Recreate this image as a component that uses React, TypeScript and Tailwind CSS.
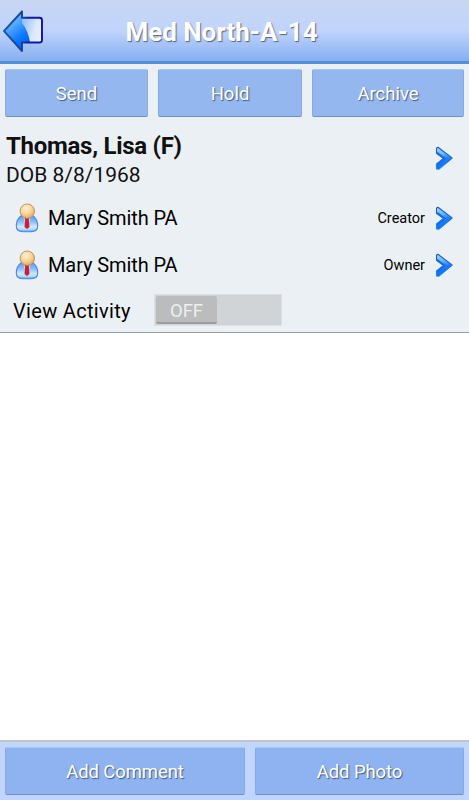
import { useState } from "react";
import clsx from "clsx";

function BackIcon() {
  return (
    <svg width="48" height="48" viewBox="0 0 48 48" aria-hidden="true">
      <defs>
        <linearGradient id="back-base" x1="0" y1="0" x2="1" y2="0.3">
          <stop offset="0" stopColor="#3f9bff" />
          <stop offset="0.5" stopColor="#8fbeff" />
          <stop offset="0.8" stopColor="#dbe7ff" />
          <stop offset="1" stopColor="#f0f5ff" />
        </linearGradient>
        <linearGradient id="back-shade" x1="0.2" y1="0" x2="0.7" y2="1">
          <stop offset="0.1" stopColor="#9bd2ff" />
          <stop offset="0.45" stopColor="#4ba3ff" />
          <stop offset="0.7" stopColor="#0f78ff" />
          <stop offset="1" stopColor="#0058ec" />
        </linearGradient>
        <linearGradient id="back-edge" x1="0" y1="0" x2="1" y2="0">
          <stop offset="0" stopColor="#1c5aa8" />
          <stop offset="0.5" stopColor="#164199" />
          <stop offset="0.65" stopColor="#0c1ca8" />
          <stop offset="1" stopColor="#0a10b8" />
        </linearGradient>
        <clipPath id="back-clip">
          <path d="M4 25 L22 5.500 V11.800 H39.500 Q42 11.800 42 14.300 V34 Q42 36.500 39.500 36.500 H22 V45 Z" />
        </clipPath>
      </defs>
      <g clipPath="url(#back-clip)">
        <rect width="48" height="48" fill="url(#back-base)" />
        <path d="M0 0 H22 V17 Q28 24 30.500 38 L22 48 H0 Z" fill="url(#back-shade)" />
      </g>
      <path
        d="M4 25 L22 5.500 V11.800 H39.500 Q42 11.800 42 14.300 V34 Q42 36.500 39.500 36.500 H22 V45 Z"
        fill="none"
        stroke="url(#back-edge)"
        strokeWidth="1.9"
        strokeLinejoin="round"
      />
    </svg>
  );
}

function ChevronIcon() {
  return (
    <svg width="18" height="24" viewBox="0 0 18 24" aria-hidden="true">
      <defs>
        <linearGradient id="chev-fill" x1="0" y1="0" x2="0.2" y2="1">
          <stop offset="0" stopColor="#a4d6ff" />
          <stop offset="0.35" stopColor="#6cbaff" />
          <stop offset="0.6" stopColor="#2080ff" />
          <stop offset="1" stopColor="#0a6cf8" />
        </linearGradient>
        <linearGradient id="chev-edge" x1="0" y1="0" x2="0" y2="1">
          <stop offset="0" stopColor="#1a5abc" />
          <stop offset="0.45" stopColor="#2a6cd0" />
          <stop offset="0.7" stopColor="#1c74f0" />
          <stop offset="1" stopColor="#2888ff" />
        </linearGradient>
      </defs>
      <path
        d="M1.500 2 L3 1.300 L17.200 12 L4 23.200 L1.500 23 V18 L8.500 12.500 L1.500 7.300 Z"
        fill="url(#chev-fill)"
      />
      <path d="M2 6.800 L9.500 12.500 L2 18.800" fill="none" stroke="#0c6cf4" strokeWidth="2" />
      <path
        d="M1.500 2 L3 1.300 L17.200 12 L4 23.200 L1.500 23 V18 L8.500 12.500 L1.500 7.300 Z"
        fill="none"
        stroke="url(#chev-edge)"
        strokeWidth="1.1"
        strokeLinejoin="round"
      />
    </svg>
  );
}

function PersonIcon() {
  return (
    <svg width="24" height="30" viewBox="0 0 24 30" aria-hidden="true">
      <defs>
        <radialGradient id="person-head" cx="0.4" cy="0.3" r="0.75">
          <stop offset="0" stopColor="#fff0d0" />
          <stop offset="0.5" stopColor="#f8d69a" />
          <stop offset="1" stopColor="#dda75c" />
        </radialGradient>
        <linearGradient id="person-body" x1="0" y1="0" x2="0" y2="1">
          <stop offset="0" stopColor="#5b97ee" />
          <stop offset="0.4" stopColor="#8fc0ff" />
          <stop offset="0.7" stopColor="#d0eaff" />
          <stop offset="0.85" stopColor="#b0dcff" />
          <stop offset="1" stopColor="#4a9cff" />
        </linearGradient>
      </defs>
      <path
        d="M6.500 12.500 C3 15 1.300 19.500 1.300 23 C1.300 27.500 4 28.700 8 28.700 H16 C20 28.700 22.700 27.500 22.700 23 C22.700 19.500 21 15 17.500 12.500 Z"
        fill="url(#person-body)"
        stroke="#4a88e6"
        strokeWidth="1.1"
      />
      <path d="M8.500 15 L10 19.500 L12 17 L14 19.500 L15.500 15 Z" fill="#cfe4ff" />
      <path d="M9.500 14.500 H14.500 L13.800 17.500 L14.500 24 L12 26 L9.500 24 L10.200 17.500 Z" fill="#d41a2c" />
      <circle cx="12.300" cy="8.200" r="7.200" fill="url(#person-head)" stroke="#b98f58" strokeWidth="0.9" />
    </svg>
  );
}

function ActionButton({ label, className }: { label: string; className: string }) {
  return (
    <button
      className={clsx(
        "h-12 rounded-xs border border-x-[#86acdf] border-t-[#a8c7ee] border-b-[#6c91c5] pt-[3px] text-[18.500px] text-white [text-shadow:1px_1px_1px_#405a80]",
        className
      )}
    >
      {label}
    </button>
  );
}

function StaffRow({ name, role }: { name: string; role: string }) {
  return (
    <div className="flex h-[47px] items-center pr-4 pl-[15px]">
      <PersonIcon />
      <span className="ml-[9px] text-[20px] tracking-[-0.1px]">{name}</span>
      <span className="mr-[10px] ml-auto pt-0.5 text-[14.500px]">{role}</span>
      <ChevronIcon />
    </div>
  );
}

export default function App() {
  const [active, setActive] = useState(false);

  return (
    <main className="flex h-screen w-full flex-col bg-white font-[Roboto,sans-serif] text-black">
      <header className="relative flex h-16 shrink-0 items-center justify-center border-b-[3px] border-[#548fda] bg-linear-to-b from-[#c8d6f0] via-[#c0d4fc] via-50% to-[#86aff0] pr-[26px]">
        <button aria-label="Back" className="absolute top-[6px] left-0">
          <BackIcon />
        </button>
        <h1 className="pt-1 text-[26px] font-bold text-white [text-shadow:1px_1px_1px_#566580]">
          Med North-A-14
        </h1>
      </header>

      <section className="h-[269px] shrink-0 border-b border-[#9a9da0] bg-[#ebf0f5]">
        <div className="flex gap-[10px] px-[5px] pt-[5px]">
          <ActionButton label="Send" className="w-[143px] bg-[#94b7ef]" />
          <ActionButton label="Hold" className="w-[144px] bg-[#94b7ef]" />
          <ActionButton label="Archive" className="flex-1 bg-[#94b7ef]" />
        </div>

        <div className="flex h-[77px] items-center justify-between pt-[5px] pr-4 pl-[6px]">
          <div className="pt-1">
            <p className="text-[24px] leading-[30px] font-bold tracking-[-0.280px] text-[#111]">Thomas, Lisa (F)</p>
            <p className="text-[21px] leading-[29px] text-[#111]">DOB 8/8/1968</p>
          </div>
          <ChevronIcon />
        </div>

        <StaffRow name="Mary Smith PA" role="Creator" />
        <StaffRow name="Mary Smith PA" role="Owner" />

        <div className="flex h-11 items-center pl-[13px]">
          <span className="w-[141px] pt-0.5 text-[20px] tracking-[0.320px]">View Activity</span>
          <button
            onClick={() => setActive(!active)}
            className={clsx(
              "flex h-8 w-32 border border-[#dce0e3] bg-[#d1d4d6] p-px",
              active && "justify-end"
            )}
          >
            <span className="h-7 w-[61px] rounded-xs border-b-2 border-[#9d9d9e] bg-[#bbbcbd] text-[18.500px] leading-[31px] text-[#eeeff0]">
              {active ? "ON" : "OFF"}
            </span>
          </button>
        </div>
      </section>

      <div className="flex-1" />

      <footer className="flex h-[60px] shrink-0 gap-[10px] border-t-2 border-[#c3c5ca] bg-[#c0d5ff] px-[5px] pt-[5px]">
        <ActionButton label="Add Comment" className="w-[240px] bg-[#8eb3f0] tracking-[-0.1px]" />
        <ActionButton label="Add Photo" className="flex-1 bg-[#8eb3f0] tracking-[-0.1px]" />
      </footer>
    </main>
  );
}
